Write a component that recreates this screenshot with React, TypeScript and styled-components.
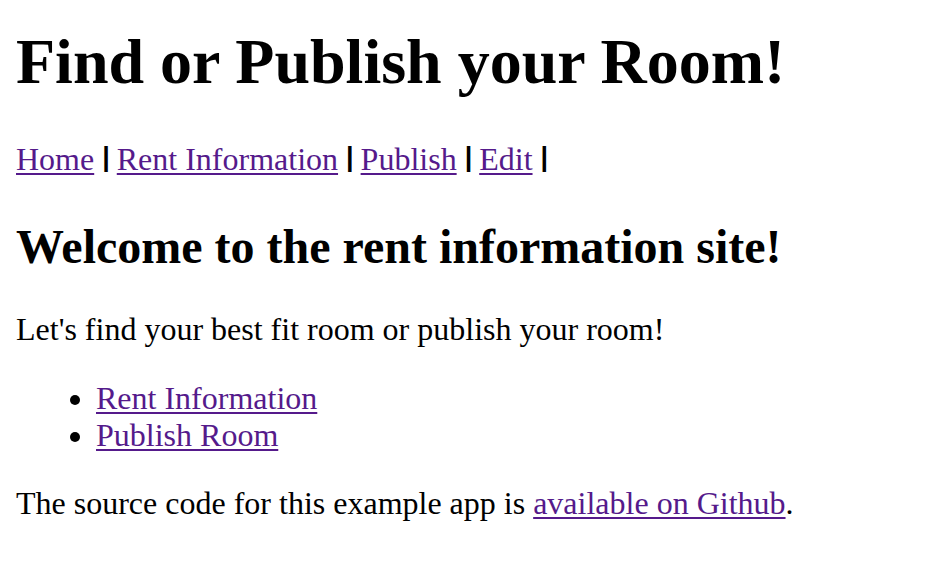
import React from "react";
import styled, { createGlobalStyle } from "styled-components";

const GlobalStyle = createGlobalStyle`
  html, body {
    margin: 0;
    padding: 0;
    background: #ffffff;
  }
  body {
    font-family: "Liberation Serif", "Times New Roman", serif;
    font-size: 32px;
    color: #000000;
  }
`;

const Page = styled.div`
  padding: 1px 16px 0;
`;

const Title = styled.h1`
  font-size: 64px;
  font-weight: bold;
  margin: 24px 0 0;
`;

const Nav = styled.nav`
  margin: 42px 0 0;
  font-size: 32px;
`;

const Link = styled.a`
  color: #551a8b;
  text-decoration: underline;
  text-decoration-thickness: 2px;
  text-underline-offset: 3px;
`;

const Sep = styled.span`
  font-family: "Liberation Sans", Arial, sans-serif;
  font-size: 27px;
  font-weight: bold;
  line-height: 0;
  vertical-align: 4px;
  margin: 0 7px 0 8px;
`;

const Heading = styled.h2`
  font-size: 48px;
  font-weight: bold;
  margin: 41px 0 0;
`;

const Para = styled.p<{ $gap: number }>`
  margin: ${(p) => p.$gap}px 0 0;
`;

const List = styled.ul`
  margin: 32px 0 0;
  padding-left: 80px;
`;

export default function App() {
  return (
    <>
      <GlobalStyle />
      <Page>
        <Title>Find or Publish your Room!</Title>
        <Nav>
          <Link href="#">Home</Link>
          <Sep>|</Sep>
          <Link href="#">Rent Information</Link>
          <Sep>|</Sep>
          <Link href="#">Publish</Link>
          <Sep>|</Sep>
          <Link href="#">Edit</Link>
          <Sep>|</Sep>
        </Nav>
        <Heading>Welcome to the rent information site!</Heading>
        <Para $gap={37}>Let's find your best fit room or publish your room!</Para>
        <List>
          <li>
            <Link href="#">Rent Information</Link>
          </li>
          <li>
            <Link href="#">Publish Room</Link>
          </li>
        </List>
        <Para $gap={31}>
          The source code for this example app is{" "}
          <Link href="#">available on Github</Link>.
        </Para>
      </Page>
    </>
  );
}
